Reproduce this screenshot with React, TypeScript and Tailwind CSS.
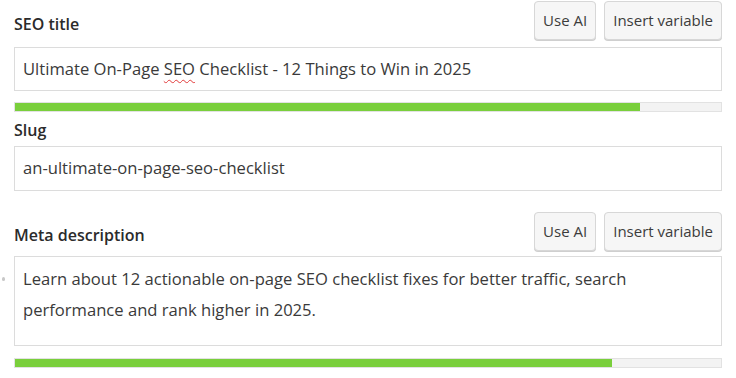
import React from "react";

const FONT = "font-['Open_Sans','Noto_Sans',sans-serif]";

function ActionButton({ children }: { children: React.ReactNode }): React.ReactElement {
  return (
    <button
      type="button"
      className="h-[39px] px-[8px] rounded-[4px] border border-[#d7d7d7] bg-[#f6f6f6] text-[15px] text-[#3c3c3c] shadow-[0_1px_0_#cfcfcf]"
    >
      {children}
    </button>
  );
}

function Progress({ percent }: { percent: number }): React.ReactElement {
  return (
    <div className="h-[10px] border border-[#e2e2e2] bg-[#f3f3f3]">
      <div className="h-full bg-[#7acf3c]" style={{ width: `${percent}%` }} />
    </div>
  );
}

export default function App(): React.ReactElement {
  return (
    <div className={`relative w-[736px] h-[378px] bg-white overflow-hidden px-[14px] pt-[1px] ${FONT} text-[#333]`}>
      {/* SEO title */}
      <div className="flex items-center justify-between">
        <label className="text-[16px] font-semibold text-[#2b2b2b] mt-[7px]">SEO title</label>
        <div className="flex gap-[8px]">
          <ActionButton>Use AI</ActionButton>
          <ActionButton>Insert variable</ActionButton>
        </div>
      </div>
      <div className="mt-[7px] h-[44px] border border-[#dcdcdc] px-[8px] flex items-center text-[16.6px] text-[#3a3a3a]">
        <span>
          Ultimate On-Page{" "}
          <span className="underline decoration-wavy decoration-[#e23b3b] decoration-1 underline-offset-[4px]">SEO</span>{" "}
          Checklist - 12 Things to Win in 2025
        </span>
      </div>
      <div className="mt-[11px]">
        <Progress percent={88.5} />
      </div>

      {/* Slug */}
      <label className="block mt-[7px] text-[16px] font-semibold text-[#2b2b2b] leading-[22px]">Slug</label>
      <div className="mt-[5px] h-[45px] border border-[#dcdcdc] px-[8px] flex items-center text-[16.6px] text-[#3a3a3a]">
        an-ultimate-on-page-seo-checklist
      </div>

      {/* Meta description */}
      <div className="mt-[21px] flex items-center justify-between">
        <label className="text-[16px] font-semibold text-[#2b2b2b] mt-[7px]">Meta description</label>
        <div className="flex gap-[8px]">
          <ActionButton>Use AI</ActionButton>
          <ActionButton>Insert variable</ActionButton>
        </div>
      </div>
      <div className="mt-[5px] h-[90px] border border-[#dcdcdc] px-[8px] pt-[6px] text-[16.6px] leading-[31px] text-[#3a3a3a]">
        Learn about 12 actionable on-page SEO checklist fixes for better traffic, search performance and rank higher in 2025.
      </div>
      <div className="mt-[12px]">
        <Progress percent={84.5} />
      </div>

      {/* stray resize handle dot at left edge */}
      <span className="absolute left-[2px] top-[277px] w-[3px] h-[4px] rounded-full bg-[#c8c8c8]" />
    </div>
  );
}
